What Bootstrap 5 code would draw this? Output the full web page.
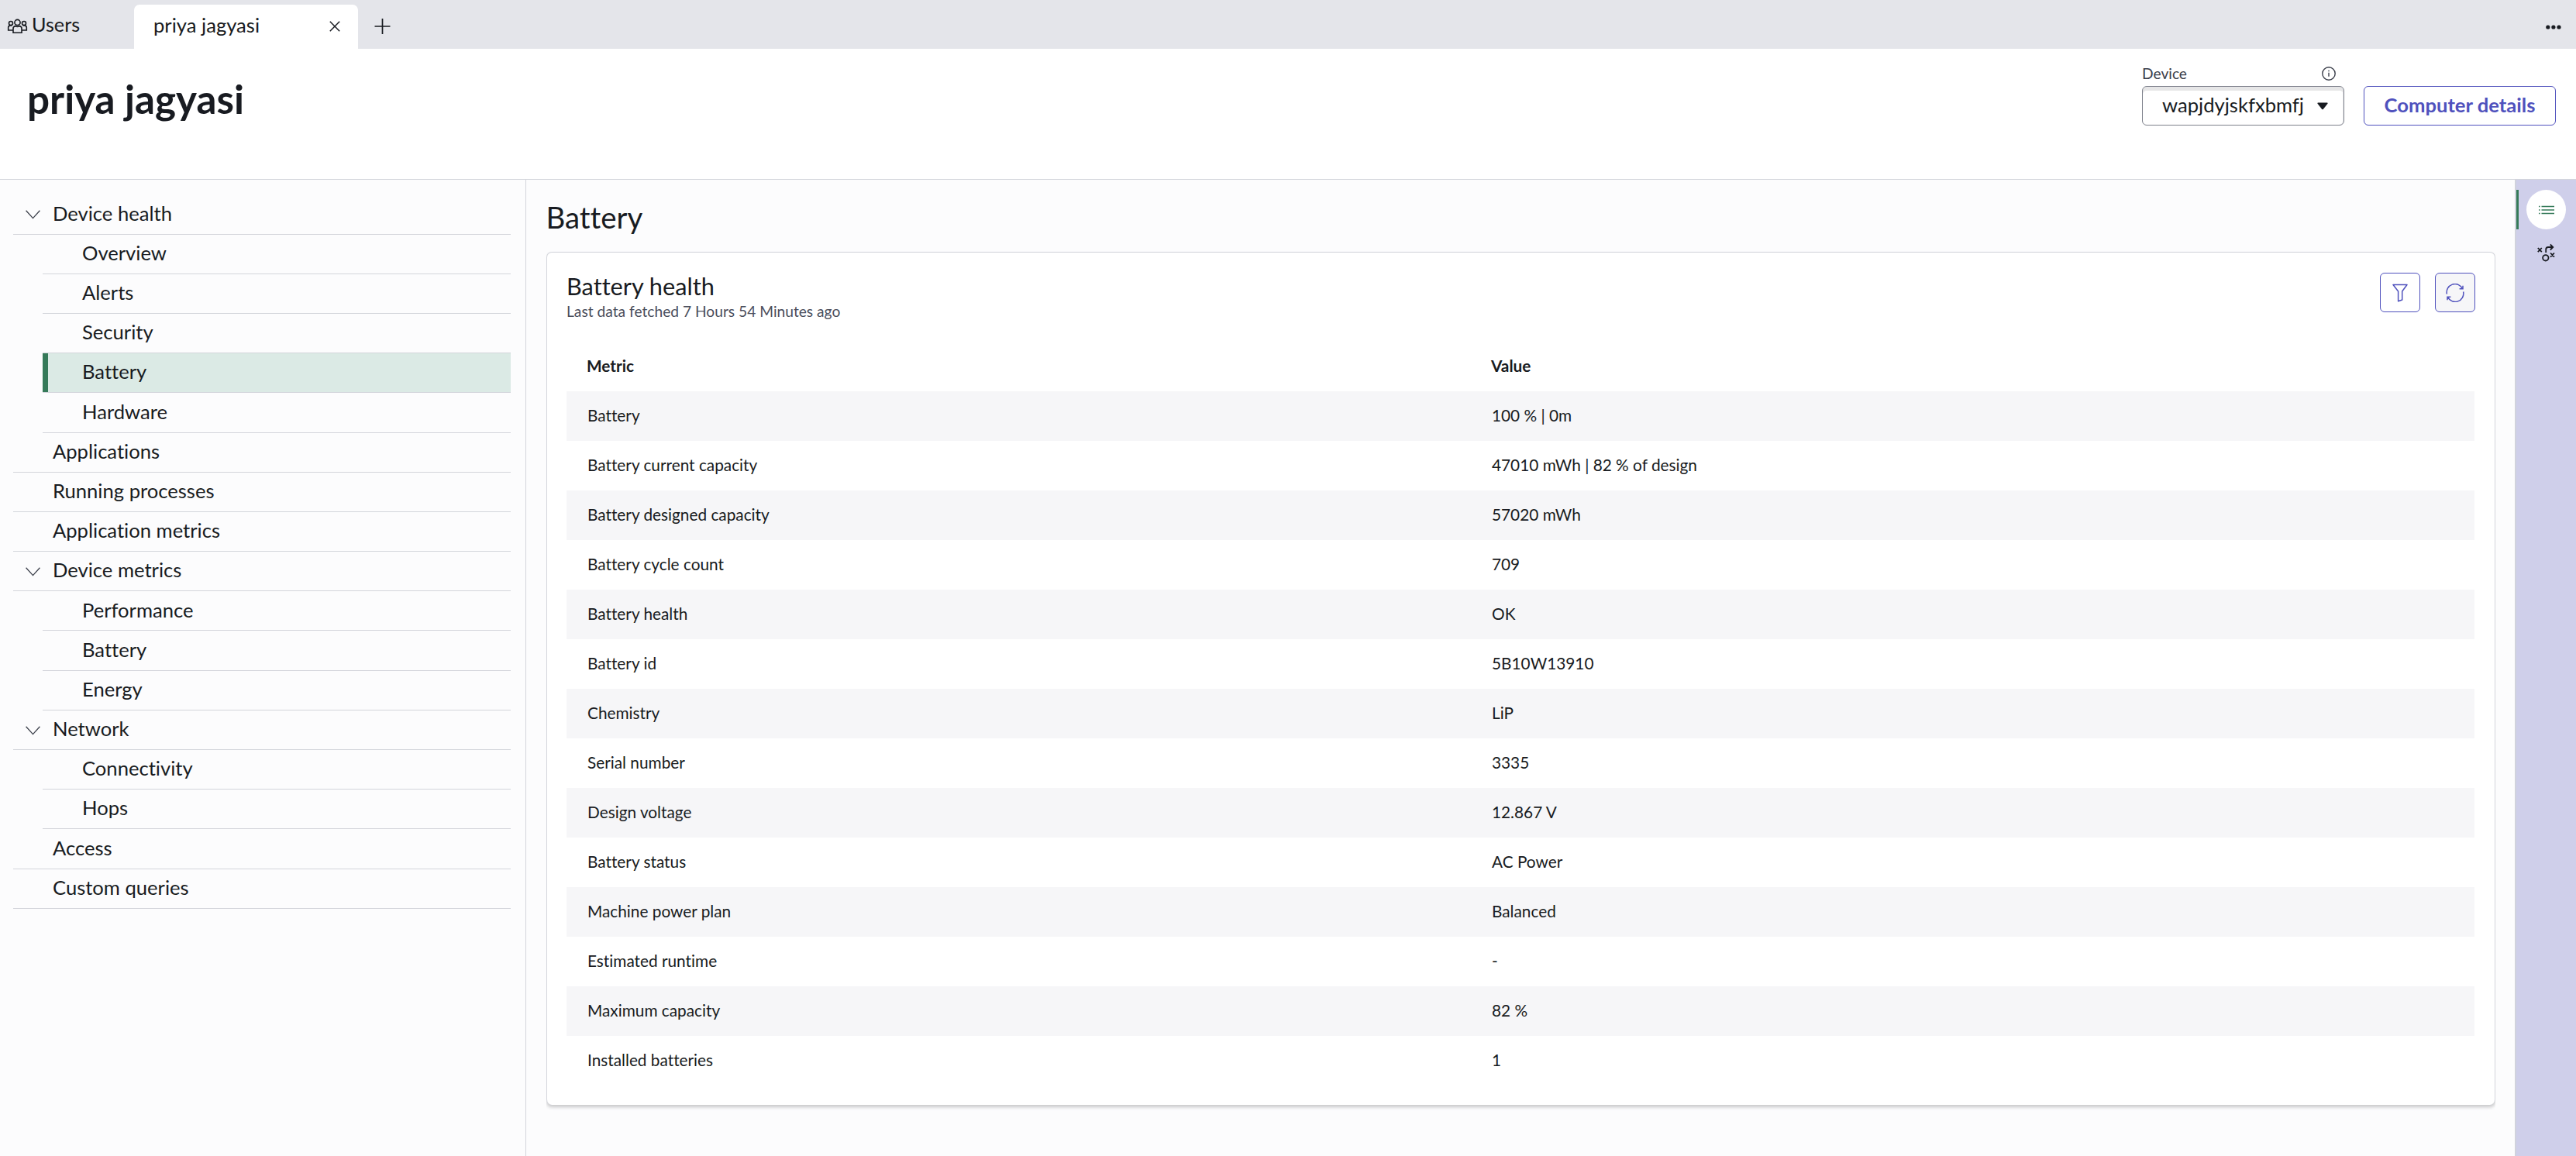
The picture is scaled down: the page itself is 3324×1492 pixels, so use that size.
<!DOCTYPE html>
<html lang="en">
<head>
<meta charset="utf-8">
<meta name="viewport" content="width=device-width, initial-scale=1">
<title>priya jagyasi</title>
<link href="https://cdn.jsdelivr.net/npm/bootstrap@5.3.0/dist/css/bootstrap.min.css" rel="stylesheet">
<style>
:root{--ink:#181b21;--soft:#4a4e5c;--line:#d3d5db;--violet:#4f51bd;--green:#357a59}
body{font-family:Lato,sans-serif;font-size:25.6px;line-height:1.2;color:var(--ink);background:#fcfcfd;height:100vh;overflow:hidden}
body,button{font-variant-ligatures:none}
svg{display:block;flex:none;fill:none;stroke:currentColor}
.tabstrip{height:63px;background:#e4e5ea}
.home-tab{width:173px;padding-left:9px;gap:5px;font-size:25.2px}
.open-tab{width:289px;height:57px;margin-top:6px;padding:0 23px 5px 25px;background:#fff;border-radius:7px 7px 0 0}
.add-tab{margin:4px 0 0 21px}
.page-head{height:169px;background:#fff;border-bottom:1px solid var(--line);padding:0 26px 0 35px}
.page-title{font-size:51.2px;font-weight:700;margin:33px 0 0;line-height:62px}
.head-tools{margin-top:21px;gap:25px}
.field-label{font-size:19.2px;line-height:22px;color:#3a3e4a;margin-bottom:5px;padding-right:11px}
.device-select{width:261px;height:51px;border:1.5px solid #7d808b;border-radius:6px;padding:0 20px 3px 25px;background:#fff;box-shadow:inset 0 5px 0 #e6e6e7,inset -1px 0 0 #e9e9eb;color:var(--ink)}
.caret-down{margin-top:3px;fill:currentColor;stroke:none}
.btn-violet{--bs-btn-color:var(--violet);--bs-btn-border-color:var(--violet);--bs-btn-bg:#fff;--bs-btn-border-width:1.5px;--bs-btn-border-radius:6px;--bs-btn-hover-color:var(--violet);--bs-btn-hover-bg:#f6f6f8;--bs-btn-hover-border-color:var(--violet)}
.details-btn{width:248px;height:51px;font-size:25.6px;font-weight:700;line-height:1.2;padding:0 0 3px}
.square-btn{width:52px;height:51px;padding:0}
.square-btn.tinted{--bs-btn-bg:#f6f6f8}
.card-tools{gap:19px;padding-top:1px;margin-right:-1px}
.side-menu{width:679px;border-right:1px solid var(--line);padding:19.4px 19px 0 17px}
.side-menu .nav-link{height:51.2px;color:var(--ink);border-bottom:1px solid var(--line);padding:0 0 3px 51px}
.side-menu .group-link{padding-left:16px;gap:16px}
.side-menu .sub-link{margin-left:38px;padding-left:51px}
.side-menu .sub-link.active{background:#dbeae5;box-shadow:inset 7px 0 0 var(--green)}
.chevron{margin-top:5px;color:#3c404b}
.main-area{padding:25px 25px 0 26px;min-width:0}
.section-title{font-size:38.4px;font-weight:400;line-height:46px;margin:0 0 22px -.5px}
.health-card{border:1px solid var(--line);border-bottom:0;border-radius:7px;background:#fff;box-shadow:0 3px 4px #c8c8ca;clip-path:inset(-2px 0 -12px 0);padding:0 26px 25px 25px}
.card-head{height:115px;padding-top:25px}
.card-name{font-size:30.7px;font-weight:400;line-height:37px;margin:0 0 2px}
.fetched{font-size:19.2px;line-height:23px;color:var(--soft);margin:0}
.metrics{font-size:20.8px;table-layout:fixed;margin:0;color:var(--ink);--bs-table-bg:#fff;--bs-table-striped-bg:#f6f6f8;--bs-table-striped-color:var(--ink);--bs-table-color:var(--ink)}
.metrics>:not(caption)>*>*{height:64px;padding:0 0 1px 27px;vertical-align:middle}
.metrics>thead>tr>th{padding:0 0 2px 26px}
.metrics .name-col{width:1167px}
.rail{width:79px;border-left:2px solid #d0d2dc;background:#cfcfea;padding-top:13px}
.rail-item{height:51px;border-left:3px solid transparent;padding-left:10px;margin-bottom:7px}
.rail-item.active{border-color:var(--green)}
.rail-dot{width:51px;height:51px}
.rail-item.active .rail-dot{background:#fff;color:var(--green)}
.rail-dot.play{padding-bottom:5px}
</style>
</head>
<body class="d-flex flex-column">
<header class="tabstrip d-flex flex-shrink-0">
  <a class="home-tab d-flex align-items-center text-reset text-decoration-none" href="#">
    <svg width="27" height="20" viewBox="0 0 27 20" stroke-width="1.6" style="margin-top:5px"><circle cx="13.5" cy="5" r="3.600"/><path d="M8 18.200v-5.300c0-1.800 1-2.900 2.800-3.300 1.600 1 3.800 1 5.400 0 1.800.4 2.800 1.500 2.800 3.300v5.300z"/><circle cx="5" cy="6" r="2.500"/><circle cx="22" cy="6" r="2.500"/><path d="M8 15H1.700v-3.500c0-1.400.9-2.300 2.300-2.600h2.600M19 15h6.300v-3.500c0-1.400-.9-2.300-2.300-2.600h-2.600"/></svg>
    <span>Users</span>
  </a>
  <div class="open-tab d-flex align-items-center justify-content-between">
    <span>priya jagyasi</span>
    <svg width="14" height="14" viewBox="0 0 14 14" stroke-width="1.500" style="margin-top:4px"><path d="M.8.800l12.400 12.400M13.200.800.800 13.200"/></svg>
  </div>
  <svg class="add-tab align-self-center" width="22" height="22" viewBox="0 0 22 22" stroke-width="1.700"><path d="M.5 11h20M10.500 1v20"/></svg>
  <svg class="align-self-center ms-auto me-3" width="26" height="10" viewBox="0 0 26 10" style="margin-top:6px;fill:currentColor;stroke:none"><circle cx="5.800" cy="5" r="2.600"/><circle cx="12.900" cy="5" r="2.600"/><circle cx="20" cy="5" r="2.600"/></svg>
</header>

<div class="page-head d-flex justify-content-between align-items-start flex-shrink-0">
  <h1 class="page-title">priya jagyasi</h1>
  <div class="head-tools d-flex align-items-end">
    <div>
      <div class="field-label d-flex justify-content-between align-items-center">
        <span>Device</span>
        <svg width="18" height="18" viewBox="0 0 18 18" stroke-width="1.400"><circle cx="9" cy="9" r="8.200"/><path d="M9 7.800v5M9 4.800v1.500"/></svg>
      </div>
      <button class="device-select d-flex align-items-center justify-content-between" type="button">
        <span>wapjdyjskfxbmfj</span>
        <svg class="caret-down" width="14" height="10" viewBox="0 0 14 10"><path d="M1 .5h12q1 .3.500 1.200L7.800 9q-.8.700-1.600 0L.5 1.700Q0 .8 1 .5z"/></svg>
      </button>
    </div>
    <button class="btn btn-violet details-btn" type="button">Computer details</button>
  </div>
</div>

<div class="d-flex flex-grow-1">
  <nav class="side-menu nav flex-column flex-nowrap flex-shrink-0" id="sideMenu"></nav>

  <main class="main-area flex-grow-1">
    <h2 class="section-title">Battery</h2>
    <section class="health-card">
      <div class="card-head d-flex justify-content-between align-items-start">
        <div>
          <h3 class="card-name">Battery health</h3>
          <p class="fetched">Last data fetched 7 Hours 54 Minutes ago</p>
        </div>
        <div class="card-tools d-flex">
          <button class="btn btn-violet square-btn d-flex align-items-center justify-content-center" type="button" aria-label="Filter">
            <svg width="20" height="24" viewBox="0 0 20 24" stroke-width="1.500" stroke-linejoin="round"><path d="M1 1.500h18l-6.300 8.500v11L7.600 22.800V10z"/></svg>
          </button>
          <button class="btn btn-violet square-btn tinted d-flex align-items-center justify-content-center" type="button" aria-label="Refresh">
            <svg width="24" height="24" viewBox="0 0 24 24" stroke-width="1.500"><path d="M1.400 13.500A10.700 10.700 0 0 1 21.500 6.600M22.600 10.500A10.700 10.700 0 0 1 2.500 17.400M22 2.800v3.900h-4.400M2 21.200v-3.900h4.400"/></svg>
          </button>
        </div>
      </div>
      <table class="table table-borderless table-striped metrics">
        <thead><tr><th class="name-col" scope="col">Metric</th><th scope="col">Value</th></tr></thead>
        <tbody id="metricRows"></tbody>
      </table>
    </section>
  </main>

  <aside class="rail flex-shrink-0">
    <div class="rail-item active">
      <div class="rail-dot rounded-circle d-flex align-items-center justify-content-center">
        <svg width="20" height="14" viewBox="0 0 20 14" stroke-width="1.300"><path d="M3.500 2.500H20M3.500 7H20M3.500 11.500H20M0 2.500h1.600M0 7h1.600M0 11.500h1.600"/></svg>
      </div>
    </div>
    <div class="rail-item">
      <div class="rail-dot play d-flex align-items-center justify-content-center">
        <svg width="23" height="24" viewBox="0 0 23 24" stroke-width="1.800"><path d="M.8 6l5 5.200M5.800 6l-5 5.200M17 12.500l5 5.200M22 12.500l-5 5.200M11.200 12V8q0-3 3-3h6M16.800 1.500 20.300 5l-3.500 3.500"/><circle cx="10.800" cy="18.800" r="3.700"/></svg>
      </div>
    </div>
  </aside>
</div>

<script>
const menu=[['group','Device health'],['sub','Overview'],['sub','Alerts'],['sub','Security'],['sub active','Battery'],['sub','Hardware'],['top','Applications'],['top','Running processes'],['top','Application metrics'],['group','Device metrics'],['sub','Performance'],['sub','Battery'],['sub','Energy'],['group','Network'],['sub','Connectivity'],['sub','Hops'],['top','Access'],['top','Custom queries']];
const chevron='<svg class="chevron" width="19" height="12" viewBox="0 0 19 12" stroke-width="1.300"><path d="M.6.700 9.500 10.600 18.400.700"/></svg>';
document.getElementById('sideMenu').innerHTML=menu.map(([kind,label])=>{
  const [base,state='']=kind.split(' ');
  return `<a class="nav-link d-flex align-items-center ${base}-link ${state}" href="#">${base==='group'?chevron:''}<span>${label}</span></a>`;
}).join('');
const metrics=[['Battery','100 % | 0m'],['Battery current capacity','47010 mWh | 82 % of design'],['Battery designed capacity','57020 mWh'],['Battery cycle count','709'],['Battery health','OK'],['Battery id','5B10W13910'],['Chemistry','LiP'],['Serial number','3335'],['Design voltage','12.867 V'],['Battery status','AC Power'],['Machine power plan','Balanced'],['Estimated runtime','-'],['Maximum capacity','82 %'],['Installed batteries','1']];
document.getElementById('metricRows').innerHTML=metrics.map(([n,v])=>`<tr><td>${n}</td><td>${v}</td></tr>`).join('');
</script>
<script src="https://cdn.jsdelivr.net/npm/bootstrap@5.3.0/dist/js/bootstrap.bundle.min.js"></script>
</body>
</html>
